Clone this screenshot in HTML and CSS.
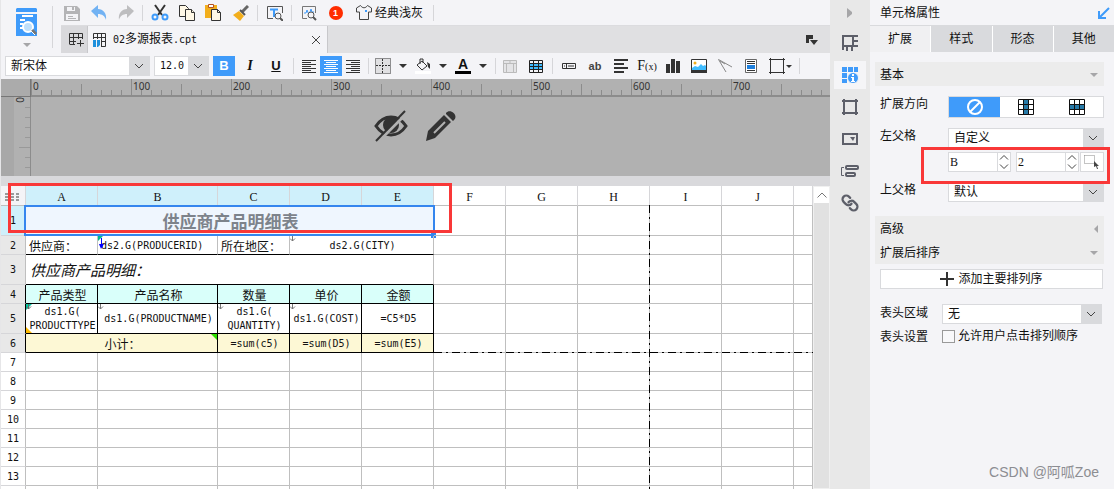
FILE: index.html
```html
<!DOCTYPE html>
<html lang="zh-CN">
<head>
<meta charset="utf-8">
<title>02多源报表.cpt</title>
<link rel="stylesheet" href="styles.css">
</head>
<body>
<div class="app">
  <main class="main">
    <header class="top">
      <button class="logo" aria-label="模板">
        <svg width="22" height="28" viewBox="0 0 22 28"><path fill="#3f9bfa" d="M1 0h19l1 1v3H0V1zM0 6h21v22H0z"/><path stroke="#fff" stroke-width="2" d="M6 8h11M4 12h5M4 16h3M4 20h5" /><circle cx="12" cy="19" r="5" fill="#bfe0fb" stroke="#fff" stroke-width="2"/><path stroke="#777" stroke-width="3" d="M16 22l4 4"/><path stroke="#fff" d="M15 23l4 4"/></svg>
        <span class="caret pale"></span>
      </button>
      <div class="topright">
        <div class="tools">
          <button aria-label="保存"><svg width="16" height="16"><path fill="#b4b4b6" d="M0 1h13l3 3v12H0z"/><path fill="#f4f4f7" d="M3 2h8v4H3zM2 9h12v6H2z"/><path fill="#b4b4b6" d="M8 2h2v3H8zM4 11h5v1H4zM4 13h8v1H4z"/></svg></button>
          <button aria-label="撤销"><svg width="16" height="16"><path fill="#72b2f3" d="M0 6l7-6v4c5 0 9 4 8 11-1-4-4-6-8-6v4z"/></svg></button>
          <button aria-label="重做"><svg width="16" height="16"><path fill="#bdbdbf" d="M16 6L9 0v4C4 4 0 8 1 15c1-4 4-6 8-6v4z"/></svg></button>
          <i class="sep"></i>
          <button aria-label="剪切"><svg width="18" height="17" fill="none"><path stroke="#333" stroke-width="2" d="M4 1l7 10M14 1L7 11"/><circle cx="4" cy="13" r="2.5" stroke="#3f9bfa" stroke-width="2"/><circle cx="14" cy="13" r="2.5" stroke="#3f9bfa" stroke-width="2"/></svg></button>
          <button aria-label="复制"><svg width="16" height="16" fill="#fff8e6" stroke="#333"><path d="M.5.5h6l3 3v8h-9z"/><path d="M6.500 4.500h6l3 3v8h-9z"/><path d="M12.500 4.500v3h3"/></svg></button>
          <button aria-label="粘贴"><svg width="17" height="17"><path fill="#f2ae1c" d="M0 1h12v13H0z"/><path fill="#fff" stroke="#b5521f" d="M3.500.5h5v3h-5z"/><path fill="#fff8e6" stroke="#333" d="M6.500 5.500h6l3 3v8h-9z"/><path stroke="#333" fill="none" d="M12.500 5.500v3h3"/></svg></button>
          <button aria-label="格式刷"><svg width="16" height="16"><path stroke="#666" stroke-width="3" d="M15 1l-6 6"/><path stroke="#555" stroke-width="2" d="M7 5l5 5"/><path fill="#f2ae1c" d="M6 6l5 5-4 5-7-6z"/></svg></button>
          <i class="sep"></i>
          <button aria-label="预览"><svg width="16" height="16" fill="none"><path stroke="#555" d="M15.500 8V1.500h-15v12H6"/><path stroke="#3f9bfa" stroke-width="2" d="M3 4.500h8M7 4v8"/><circle cx="11" cy="11" r="3" fill="#f4f4f7" stroke="#555"/><path stroke="#555" stroke-width="2" d="M13 13l3 3"/></svg></button>
          <i class="sep"></i>
          <button aria-label="性能"><svg width="16" height="16" fill="none"><path stroke="#777" d="M14.500 8V1.500h-13v12H6"/><path stroke="#3f9bfa" d="M3 8h2l1-3 2 5 2-6 1 3h2"/><circle cx="10" cy="10" r="3" fill="#f4f4f7" stroke="#555"/><path stroke="#555" stroke-width="2" d="M12 12l3 3"/></svg></button>
          <button aria-label="通知"><span class="badge">1</span></button>
          <button class="theme"><svg width="16" height="15" fill="none"><path stroke="#444" d="M4.500.5L.5 3v4h3v7.500h9V7h3V3l-4-2.500c-2 3-5 3-7 0z"/><path fill="#3f9bfa" d="M9 5h2v2H9z"/></svg>经典浅灰</button>
          <i class="sep"></i>
        </div>
        <div class="tabs">
          <button class="newtab" aria-label="新建"><svg width="15" height="15" fill="none" stroke="#333"><path d="M.5 12V1.500h13V7M.5 5.500h13M.5 9.500H7M4.500 2v10M9.500 2v5M.5 12.500H6M11.500 8v6.500M8 11.500h7"/></svg></button>
          <div class="filetab">
            <svg width="14" height="14" fill="none"><path stroke="#333" d="M.5 6V.5h12v13H8M.5 4.500h12M8 8.500h4.500M4.500 1v5M8.500 1v12"/><path fill="#1e90dc" d="M0 7h3v7H0zM4 7h3v5l-2 2H4z"/></svg>
            <span class="filename"><span class="mono">02</span>多源报表<span class="mono">.cpt</span></span>
            <button class="close" aria-label="关闭"><svg width="8" height="8" stroke="#444"><path d="M0 0l8 8M8 0L0 8"/></svg></button>
          </div>
          <button class="tablist" aria-label="标签列表"><svg width="12" height="10" fill="#333"><path d="M0 0h7v4H3v4H0zM4 5h8l-4 5z"/></svg></button>
        </div>
      </div>
    </header>

    <div class="format">
      <label class="pick fontpick"><select aria-label="字体"><option>新宋体</option></select><svg class="chev" viewBox="0 0 20 18"><path d="M6 7l4 4 4-4"/></svg></label>
      <label class="pick sizepick"><select class="mono" aria-label="字号"><option>12.0</option></select><svg class="chev" viewBox="0 0 20 18"><path d="M6 7l4 4 4-4"/></svg></label>
      <button class="b on"><b>B</b></button>
      <button class="b it">I</button>
      <button class="b un">U</button>
      <i class="sep wide"></i>
      <button class="al" aria-label="左对齐"><svg width="14" height="13" stroke="#333"><path d="M0 .5h14M0 2.500h9M0 4.500h14M0 6.500h9M0 8.500h14M0 10.500h9M0 12.500h14"/></svg></button>
      <button class="al on" aria-label="居中"><svg width="14" height="13" stroke="#fff"><path d="M0 .5h14M2 2.500h10M0 4.500h14M2 6.500h10M0 8.500h14M2 10.500h10M0 12.500h14"/></svg></button>
      <button class="al" aria-label="右对齐"><svg width="14" height="13" stroke="#333"><path d="M0 .5h14M5 2.500h9M0 4.500h14M5 6.500h9M0 8.500h14M5 10.500h9M0 12.500h14"/></svg></button>
      <i class="sep wide"></i>
      <button class="drop" aria-label="边框"><svg width="16" height="16" fill="none" stroke="#333"><path fill="#e0e0e2" stroke-dasharray="1 1" d="M.5.5h15v15H.5z"/><path stroke-dasharray="2 1" d="M7.500 1v14M1 7.500h14"/></svg><span class="caret"></span></button>
      <button class="drop" aria-label="填充"><svg width="16" height="16" fill="none"><path stroke="#333" d="M7 3l5 5-5 4-5-5zM5 6V1h3v4"/><path fill="#333" d="M12 4l3 2v5l-2-2z"/><path fill="#fff" d="M0 13h16v3H0z"/></svg><span class="caret"></span></button>
      <button class="drop" aria-label="文字颜色"><span class="fontcolor">A</span><span class="caret"></span></button>
      <i class="sep slim"></i>
      <button class="b" aria-label="单元格元素"><svg width="14" height="13" fill="none" stroke="#bbb"><path fill="#e4e4e6" d="M.5.5h13v12H.5zM0 3.500h14M3.500 4v8M10.500 4v8M7 0v3"/></svg></button>
      <button class="b" aria-label="表格"><svg width="14" height="13" fill="none" stroke="#222"><path fill="#3fbcff" d="M0 4h14v5H0z" stroke="none"/><path d="M.5.5h13v12H.5zM0 3.500h14M0 6.500h14M0 9.500h14M4.500 0v13M9.500 0v13"/></svg></button>
      <i class="sep"></i>
      <button class="b" aria-label="文本框"><svg width="14" height="6" fill="none" stroke="#333"><path d="M.5.5h13v5H.5zM4.500 0v6M2 3h1M6 3h6"/></svg></button>
      <button class="b ab">ab</button>
      <button class="b" aria-label="富文本"><svg width="14" height="14" stroke="#333" stroke-width="2"><path d="M0 1h14M0 5h10M0 9h14M0 13h10"/></svg></button>
      <button class="b fx">F<small>(x)</small></button>
      <button class="b" aria-label="图表"><svg width="14" height="14" fill="#333"><path d="M0 5h4v9H0zM5 0h4v14H5zM10 2h4v12h-4z"/></svg></button>
      <button class="b" aria-label="图片"><svg width="16" height="14"><path fill="#fff" stroke="#333" d="M.5.5h15v13H.5z"/><path fill="#3fbcff" d="M1 9l3-2 3 1 3-3 2 2 2-1 1 1v4H1z"/><path fill="#333" d="M0 11h16v3H0z"/><circle cx="4" cy="4" r="1.500" fill="#f2ae1c"/></svg></button>
      <button class="b" aria-label="斜线"><svg width="14" height="14" stroke="#888" fill="none"><path d="M8 13L.5.500 14 8M2 2l5 3"/></svg></button>
      <button class="b" aria-label="子报表"><svg width="12" height="14"><path fill="#fff" stroke="#666" d="M.5.5h11v13H.5z"/><path stroke="#333" d="M2 2.500h8M2 4.500h8M2 11.500h8"/><path fill="#1e7fdc" d="M2 6h8v4H2z"/></svg></button>
      <button class="b frame" aria-label="悬浮元素"><svg width="16" height="16" stroke="#333" fill="none"><path d="M1.500 0v16M14.500 0v16M0 1.500h16M0 14.500h16"/></svg><span class="caret tiny"></span></button>
      <i class="sep"></i>
    </div>

    <section class="canvas">
      <div class="corner"></div>
      <svg class="hruler" height="17">
        <defs>
          <pattern id="h" width="100" height="17" patternUnits="userSpaceOnUse"><path stroke="#8c8c8c" d="M.5 0v17M50.500 5v12M10.500 11v6M20.500 11v6M30.500 11v6M40.500 11v6M60.500 11v6M70.500 11v6M80.500 11v6M90.500 11v6"/></pattern>
          <pattern id="v" width="17" height="100" patternUnits="userSpaceOnUse"><path stroke="#999" d="M5 50.500h12M11 10.500h6M11 20.500h6M11 30.500h6M11 40.500h6M11 60.500h6M11 70.500h6M11 80.500h6M11 90.500h6"/></pattern>
        </defs>
        <rect width="100%" height="17" fill="url(#h)"/>
        <g class="rnum"><text x="2" y="11">0</text><text x="102" y="11">100</text><text x="202" y="11">200</text><text x="302" y="11">300</text><text x="402" y="11">400</text><text x="502" y="11">500</text><text x="602" y="11">600</text><text x="702" y="11">700</text></g>
      </svg>
      <div class="vruler"><span class="vnum">0</span><svg width="17" height="100%"><rect width="17" height="100%" fill="url(#v)"/></svg></div>
      <div class="stage">
        <svg width="34" height="32" viewBox="0 0 34 32"><path fill="none" stroke="#333" stroke-width="3" d="M2 16c8-12 22-12 30 0-8 12-22 12-30 0z"/><circle cx="17" cy="15" r="8" fill="#333"/><path stroke="#b1b1b1" stroke-width="3" d="M4 32L33 3"/><path stroke="#333" stroke-width="2" d="M2 31L31 1"/></svg>
        <svg width="32" height="32" viewBox="0 0 32 32"><path fill="#333" d="M1 31l2-10L19 5l7 7-16 16zM21 3c4-5 13 2 8 7l-1 1-7-7z"/><path stroke="#b1b1b1" stroke-width="2" d="M9 23L20 12"/></svg>
      </div>
    </section>
    <div class="splitter"></div>

    <section class="sheet">
      <div class="gridwrap">
        <table class="grid">
          <colgroup><col class="c0"><col class="c"><col class="cw"><col class="c"><col class="c"><col class="c"><col class="c"><col class="c"><col class="c"><col class="c"><col class="c"><col></colgroup>
          <thead><tr><th class="all"><svg width="16" height="9" fill="#999"><path d="M0 0h4v2H0zM6 0h3v2H6zM11 0h3v2h-3zM0 3h4v2H0zM6 3h3v2H6zM11 3h3v2h-3zM0 6h4v2H0zM6 6h3v2H6zM11 6h3v2h-3z"/></svg></th><th class="sel">A</th><th class="sel">B</th><th class="sel">C</th><th class="sel">D</th><th class="sel">E</th><th>F</th><th>G</th><th>H</th><th>I</th><th>J</th><th></th></tr></thead>
          <tbody>
            <tr class="tall"><th class="sel">1</th><td colspan="5" class="title">供应商产品明细表<i class="handle"></i></td><td></td><td></td><td></td><td></td><td></td><td></td></tr>
            <tr class="line"><th class="used">2</th><td class="cn left">供应商：</td><td class="left id"><svg class="mark" width="8" height="14"><path fill="#00b894" d="M0 0h5L0 5z"/><path fill="#00f" d="M3 2h1v6h2l-3 5-2-5h2z"/></svg>ds2.G(PRODUCERID)</td><td class="cn left nob">所在地区：</td><td colspan="2"><svg class="mark" width="6" height="6"><path fill="none" stroke="#777" d="M2.500 0v5M0 2.500l2.500 2.500L5 2.500"/></svg>ds2.G(CITY)</td><td></td><td></td><td></td><td></td><td></td><td></td></tr>
            <tr class="tall line"><th class="used">3</th><td colspan="5" class="sub">供应商产品明细：</td><td></td><td></td><td></td><td></td><td></td><td></td></tr>
            <tr class="box mint"><th class="used">4</th><td class="cn">产品类型</td><td class="cn">产品名称</td><td class="cn">数量</td><td class="cn">单价</td><td class="cn">金额</td><td></td><td></td><td></td><td></td><td></td><td></td></tr>
            <tr class="box tall"><th class="used">5</th><td><svg class="mark" width="6" height="6"><path fill="#00c8a0" d="M0 0h6L0 6z"/><path stroke="#666" fill="none" d="M2.500 0v5M0 2.500l2.500 2.500L5 2.500"/></svg><svg class="mark low" width="6" height="6"><path fill="#fb0" d="M0 0l6 6H0z"/></svg>ds1.G(<br>PRODUCTTYPE</td><td><svg class="mark" width="6" height="6"><path fill="none" stroke="#777" d="M2.500 0v5M0 2.500l2.500 2.500L5 2.500"/></svg>ds1.G(PRODUCTNAME)</td><td><svg class="mark" width="6" height="6"><path fill="none" stroke="#777" d="M2.500 0v5M0 2.500l2.500 2.500L5 2.500"/></svg>ds1.G(<br>QUANTITY)</td><td><svg class="mark" width="6" height="6"><path fill="none" stroke="#777" d="M2.500 0v5M0 2.500l2.500 2.500L5 2.500"/></svg>ds1.G(COST)</td><td>=C5*D5</td><td></td><td></td><td></td><td></td><td></td><td></td></tr>
            <tr class="box cream"><th class="used">6</th><td colspan="2" class="cn"><svg class="mark far" width="6" height="6"><path fill="#2ee000" d="M0 0h6v6z"/></svg>小计：</td><td>=sum(c5)</td><td>=sum(D5)</td><td>=sum(E5)</td><td></td><td></td><td></td><td></td><td></td><td></td></tr>
            <tr><th>7</th><td></td><td></td><td></td><td></td><td></td><td></td><td></td><td></td><td></td><td></td><td></td></tr>
            <tr><th>8</th><td></td><td></td><td></td><td></td><td></td><td></td><td></td><td></td><td></td><td></td><td></td></tr>
            <tr><th>9</th><td></td><td></td><td></td><td></td><td></td><td></td><td></td><td></td><td></td><td></td><td></td></tr>
            <tr><th>10</th><td></td><td></td><td></td><td></td><td></td><td></td><td></td><td></td><td></td><td></td><td></td></tr>
            <tr><th>11</th><td></td><td></td><td></td><td></td><td></td><td></td><td></td><td></td><td></td><td></td><td></td></tr>
            <tr><th>12</th><td></td><td></td><td></td><td></td><td></td><td></td><td></td><td></td><td></td><td></td><td></td></tr>
            <tr><th>13</th><td></td><td></td><td></td><td></td><td></td><td></td><td></td><td></td><td></td><td></td><td></td></tr>
            <tr><th></th><td></td><td></td><td></td><td></td><td></td><td></td><td></td><td></td><td></td><td></td><td></td></tr>
          </tbody>
        </table>
        <div class="pagev"></div>
        <div class="pageh"></div>
      </div>
      <div class="scroll"><button aria-label="向上滚动"><svg width="10" height="6" fill="none" stroke="#777"><path d="M.5 5.500L5 1l4.500 4.500"/></svg></button></div>
      <div class="note note-title"></div>
    </section>
  </main>

  <nav class="rail">
    <button class="fold" aria-label="收起"><svg width="6" height="10" fill="#a6a6a8"><path d="M0 0l5 4v2l-5 4z"/></svg></button>
    <button aria-label="单元格元素"><svg width="16" height="16" fill="none" stroke="#5d5f69" stroke-width="2"><path d="M16 1H1v14M1 11h10V1M12 6h4M12 11h4M5 12v4M10 12v4"/></svg></button>
    <button class="on" aria-label="单元格属性"><svg width="17" height="16" fill="#3f9bfa"><path d="M0 0h5v5H0zM6 0h5v5H6zM12 0h4v5h-4zM0 6h5v5H0zM0 12h5v4H0z"/><circle cx="11" cy="11" r="5.500" stroke="#f5f5f7"/><path fill="#fff" d="M10 7h2v2h-2zM9 10h3v4h1v1H9v-1h1v-3H9z"/></svg></button>
    <button aria-label="悬浮元素"><svg width="16" height="16" fill="none" stroke="#5d5f69" stroke-width="2"><path d="M2 2h12v12H2zM0 2h2V0M14 0v2h2M0 14h2v2M14 16v-2h2"/></svg></button>
    <button aria-label="控件设置"><svg width="16" height="12" fill="none" stroke="#5d5f69" stroke-width="2"><path d="M1 1h14v10H1z"/><path stroke="none" fill="#5d5f69" d="M8 4h5l-2 4z"/></svg></button>
    <button aria-label="条件属性"><svg width="18" height="12" fill="none" stroke="#5d5f69" stroke-width="2"><rect x="5" y="1" width="12" height="3" rx="1"/><rect x="5" y="8" width="9" height="3" rx="1"/><path stroke-width="1" d="M3 2.500H.5v8H3"/></svg></button>
    <button aria-label="超级链接"><svg width="18" height="18" viewBox="0 0 24 24" fill="none" stroke="#5d5f69" stroke-width="3" stroke-linecap="round"><path d="M14 13a5 5 0 0 1-7.540.540l-3-3a5 5 0 0 1 7.070-7.070l1.720 1.710M10 11a5 5 0 0 1 7.540-.540l3 3a5 5 0 0 1-7.070 7.070l-1.710-1.710"/></svg></button>
  </nav>

  <aside class="panel">
    <div class="ptitle"><span>单元格属性</span><svg width="12" height="12" fill="none" stroke="#3f9bfa" stroke-width="2"><path d="M11 1L2 10M1 4v7h7"/></svg></div>
    <div class="ptabs"><button class="on">扩展</button><button>样式</button><button>形态</button><button>其他</button></div>
    <div class="pbody">
      <h2>基本<span class="caret pale"></span></h2>
      <div class="row first"><span class="lbl">扩展方向</span>
        <div class="seg"><button class="on" aria-label="不扩展"><svg width="16" height="16" fill="none" stroke="#fff" stroke-width="2"><circle cx="8" cy="8" r="7"/><path d="M3 13L13 3"/></svg></button><button aria-label="纵向"><svg width="16" height="16" fill="none" stroke="#111"><path fill="#277aa8" stroke="none" d="M5 0h6v16H5z"/><path d="M.5.5h15v15H.5zM0 5.500h16M0 10.500h16M5.500 0v16M10.500 0v16"/></svg></button><button aria-label="横向"><svg width="16" height="16" fill="none" stroke="#111"><path fill="#277aa8" stroke="none" d="M0 5h16v6H0z"/><path d="M.5.5h15v15H.5zM0 5.500h16M0 10.500h16M5.500 0v16M10.500 0v16"/></svg></button></div>
      </div>
      <div class="row"><label class="lbl" for="lp">左父格</label><div class="pick"><select id="lp"><option>自定义</option></select><svg class="chev" viewBox="0 0 20 18"><path d="M6 7l4 4 4-4"/></svg></div></div>
      <div class="row near"><span class="lbl"></span>
        <div class="cellref">
          <input class="serif" type="text" value="B" aria-label="列"><span class="spin"><button aria-label="列增"><svg width="10" height="5"><path d="M1 4.500L5 .5l4 4"/></svg></button><button aria-label="列减"><svg width="10" height="5"><path d="M1 .5l4 4 4-4"/></svg></button></span>
          <input class="serif second" type="text" value="2" aria-label="行"><span class="spin"><button aria-label="行增"><svg width="10" height="5"><path d="M1 4.500L5 .5l4 4"/></svg></button><button aria-label="行减"><svg width="10" height="5"><path d="M1 .5l4 4 4-4"/></svg></button></span>
          <button class="pickcell" aria-label="选择单元格"><svg width="16" height="14"><path fill="none" stroke="#888" stroke-dasharray="1 1" d="M.5.5h10M.5 8.500h10M.5.5v8M10.500.5v8"/><path fill="#444" d="M10 6l5 5h-2l1 3h-1l-1-3-2 1z"/></svg></button>
        </div>
        <div class="note note-ref"></div>
      </div>
      <div class="row"><label class="lbl" for="up">上父格</label><div class="pick"><select id="up"><option>默认</option></select><svg class="chev" viewBox="0 0 20 18"><path d="M6 7l4 4 4-4"/></svg></div></div>
      <h2 class="gap">高级<span class="caret pale side"></span></h2>
      <h2>扩展后排序<span class="caret pale"></span></h2>
      <button class="add"><svg width="14" height="14" stroke="#333" stroke-width="2"><path d="M0 7h14M7 0v14"/></svg>添加主要排列序</button>
      <div class="row head"><label class="lbl" for="ha">表头区域</label><div class="pick"><select id="ha"><option>无</option></select><svg class="chev" viewBox="0 0 20 18"><path d="M6 7l4 4 4-4"/></svg></div></div>
      <div class="row set"><span class="lbl">表头设置</span><label class="chk"><input type="checkbox">允许用户点击排列顺序</label></div>
    </div>
    <div class="credit">CSDN @阿呱Zoe</div>
  </aside>
</div>
</body>
</html>
```
FILE: styles.css
```css
* { box-sizing: border-box; }
body { margin: 0; font: 12px/16px "Liberation Sans", "Noto Sans CJK SC", sans-serif; color: #111; background: #f4f4f7; }
button, select, input { font: inherit; color: inherit; margin: 0; padding: 0; border: 0; background: none; border-radius: 0; }
button { display: flex; align-items: center; justify-content: center; flex: none; }
svg { flex: none; display: block; }
.mono { font-family: "DejaVu Sans Mono", monospace; font-size: 10px; }
.serif { font-family: "Liberation Serif", serif; font-size: 12px; }

.app { display: flex; height: 100vh; overflow: hidden; }
.main { flex: 1; min-width: 0; display: flex; flex-direction: column; border-left: 1px solid #e6e6e8; }
.caret { border: 4px solid transparent; border-top-color: #333; border-bottom: 0; }
.caret.pale { border-top-color: #a6a6a8; }
.caret.tiny { border-width: 3px; border-bottom: 0; }
.caret.side { border: 4px solid transparent; border-right-color: #a6a6a8; border-left: 0; }
.sep { flex: none; width: 7px; height: 16px; background: linear-gradient(#d6d6d9, #d6d6d9) center / 1px 100% no-repeat; }
.sep.wide { width: 9px; }
.sep.slim { width: 4px; }

.top { display: flex; }
.logo { width: 52px; height: 42px; margin-top: 6px; flex-direction: column; gap: 7px; border-right: 1px solid #d6d6d9; }
.topright { flex: 1; min-width: 0; padding-left: 5px; }
.tools { display: flex; align-items: center; height: 25px; }
.tools button { width: 27px; }
.tools .theme { width: auto; gap: 3px; padding: 0 7px; }
.badge { width: 14px; height: 14px; border-radius: 50%; background: #ff2d00; color: #fff; font-size: 9px; line-height: 14px; font-weight: bold; }
.tabs { display: flex; height: 28px; margin-left: 3px; background: #e0e0e2; border-top: 1px solid #dcdcdf; }
.newtab { width: 27px; background: #d9d9dc; border-right: 1px solid #c8c8cb; padding-left: 4px; }
.filetab { display: flex; align-items: center; gap: 6px; width: 240px; padding: 0 7px 0 5px; background: #f4f4f7; border-right: 1px solid #c8c8cb; }
.filename { flex: 1; }
.tablist { margin-left: auto; width: 36px; }

.format { display: flex; align-items: center; height: 26px; padding-left: 4px; }
.pick { display: grid; grid-template: 18px / minmax(0, 1fr); background: #fff; border: 1px solid #d9dadd; height: 20px; }
.pick select { grid-area: 1 / 1; appearance: none; padding-left: 5px; line-height: 18px; }
.chev { grid-area: 1 / 1; justify-self: end; width: 20px; height: 18px; background: #d9dadd; fill: none; stroke: #444; pointer-events: none; }
.fontpick { width: 145px; margin-right: 4px; }
.sizepick { width: 55px; margin-right: 2px; }
.b { width: 22px; height: 20px; margin: 0 2px; font-size: 13px; }
.b.on, .al.on { background: #3f9bfa; color: #fff; }
.it { font: italic bold 14px "Liberation Serif", serif; }
.un { font-weight: bold; text-decoration: underline; }
.al { width: 22px; height: 20px; }
.drop { width: 40px; height: 20px; gap: 8px; padding: 0 4px 0 0; }
.fontcolor { font-weight: bold; font-size: 14px; line-height: 13px; width: 16px; border-bottom: 3px solid #000; }
.ab { font-size: 11px; font-weight: bold; color: #444; }
.fx { font: 14px "Liberation Serif", serif; }
.fx small { font-size: 10px; }
.frame { gap: 1px; width: 28px; }

.canvas { display: grid; grid-template: 18px 79px / 13px 17px minmax(0, 1fr); background: #b1b1b1; }
.corner { grid-column: 1 / 3; background: #ababab; border-right: 1px solid #777; border-bottom: 1px solid #777; }
.hruler { width: 100%; height: 18px; border-bottom: 2px solid #8c8c8c; }
.vruler { grid-column: 2; position: relative; height: 100%; overflow: hidden; border-right: 1px solid #8c8c8c; }
.rnum, .vnum { font: 10px/10px "Noto Sans", sans-serif; fill: #333; color: #333; }
.vnum { position: absolute; left: 1px; top: 0; writing-mode: sideways-lr; }
.canvas::before { content: ""; grid-area: 2 / 1; background: #a8a8a8; }
.stage { display: flex; gap: 17px; padding: 13px 0 0 343px; }
.splitter { height: 10px; background: #d9d9dc; flex: none; }

.sheet { position: relative; flex: 1; min-height: 0; display: flex; background: #fff; }
.gridwrap { position: relative; flex: 1; min-width: 0; overflow: hidden; }
.grid { width: 100%; table-layout: fixed; border-collapse: separate; border-spacing: 0; }
.c0 { width: 25px; }
.c { width: 72px; }
.cw { width: 120px; }
.grid th, .grid td { position: relative; height: 19px; padding: 1px 0 0; border: 0 solid #bfbfbf; border-width: 0 1px 1px 0; font: 10px/14px "DejaVu Sans Mono", monospace; text-align: center; white-space: nowrap; }
.grid td { padding-left: 2px; }
.grid th { border-color: #d6d6d9 #bfbfbf; }
.grid thead th { height: 20px; border-color: #d6d6d9; border-bottom-color: #bfbfbf; padding-top: 3px; font-family: "Liberation Serif", serif; font-size: 12px; }
.grid .tall th, .grid .tall td { height: 30px; }
.grid th.all { background: #f4f4f7; }
.all svg { margin: 0 auto; }
.grid th.sel { background: #cff0fb; }
.grid th.used { background: #e8e8e8; }
.grid td.cn { font: 12px/16px "Noto Sans CJK SC", sans-serif; }
.grid td.left { text-align: left; padding-left: 3px; }
.grid td.title { font: bold 17px/20px "Noto Sans CJK SC", sans-serif; color: #7d838b; background: #eff6fe; }
.title::before { content: ""; position: absolute; inset: -1px -2px; border: 2px solid #3586ee; }
.handle { position: absolute; right: -3px; bottom: -3px; width: 5px; height: 5px; background: #3586ee; }
.grid td.sub { font: italic 15px/20px "Noto Sans CJK SC", sans-serif; text-align: left; padding-left: 4px; }
.line td:nth-child(-n+5):not(:empty) { border-bottom-color: #000; }
.grid .nob { border-right-color: #bfbfbf; }
.box th, .box td:not(:empty) { border-right-color: #000; }
.box td:not(:empty) { border-bottom-color: #000; }
.mint td:not(:empty) { background: #d9fffa; }
.cream td:not(:empty) { background: #fdf8d5; }
.mark { position: absolute; left: 0; top: 0; }
.mark.low { top: auto; bottom: 0; }
.mark.far { left: auto; right: 0; }
.pagev, .pageh { position: absolute; --dash: #000 0 8px, transparent 8px 12px, #000 12px 14px, transparent 14px 18px; }
.pagev { left: 648px; top: 19px; bottom: 0; width: 1px; background: repeating-linear-gradient(to bottom, var(--dash)); }
.pageh { left: 433px; right: 0; top: 166px; height: 1px; background: repeating-linear-gradient(to right, var(--dash)); }
.scroll { width: 17px; background: #e1e1e1; border: 1px solid #f0f0f0; }
.scroll button { width: 15px; height: 16px; background: #fff; }
.note { position: absolute; border: 3px solid #f93838; pointer-events: none; }
.note-title { left: 7px; top: -3px; width: 444px; height: 50px; }

.rail { flex: none; width: 40px; background: #e8e8e8; display: flex; flex-direction: column; align-items: center; gap: 4px; }
.rail button { width: 32px; height: 28px; }
.rail .fold { height: 25px; }
.rail .on { background: #f5f5f7; }

.panel { position: relative; flex: none; width: 244px; }
.ptitle { display: flex; justify-content: space-between; align-items: center; height: 26px; padding: 0 4px 0 10px; border-bottom: 1px solid #d9dadd; }
.ptabs { display: flex; gap: 1px; height: 26px; background: #fff; }
.ptabs button { flex: 1; background: #d9dadd; }
.ptabs .on { background: #f0f0f2; }
.pbody { padding: 10px 10px 0 5px; }
h2 { display: flex; align-items: center; justify-content: space-between; height: 24px; margin: 0; padding: 2px 6px 0 5px; font: inherit; background: #ececec; }
h2.gap { margin-top: 14px; }
.row { position: relative; display: flex; margin-top: 10px; padding-left: 5px; }
.row.near { margin-top: 4px; }
.lbl { flex: none; width: 68px; height: 16px; }
.row > :nth-child(2) { flex: 1; min-width: 0; }
.seg { display: flex; height: 22px; background: #fff; border: 1px solid #d9dadd; }
.seg button { flex: 1; }
.seg .on { background: #3f9bfa; }
.cellref { display: flex; height: 20px; }
.cellref input { flex: 1; width: 0; background: #fff; border: 1px solid #d9dadd; padding-left: 1px; }
.cellref .second { margin-left: 5px; }
.spin { width: 13px; background: #fff; border: 1px solid #d9dadd; border-left: 0; }
.spin button { width: 100%; height: 9px; }
.spin svg { fill: none; stroke: #444; }
.pickcell { width: 24px; margin-left: 1px; background: #fff; border: 1px solid #d9dadd; }
.note-ref { left: 46px; right: -6px; top: -5px; height: 37px; z-index: 1; }
.add { width: 223px; max-width: 100%; height: 20px; margin: 5px 0 0 5px; gap: 4px; background: #fff; border: 1px solid #d9dadd; }
.row.head { margin-top: 15px; padding-right: 2px; }
.head .lbl, .set .lbl { width: 62px; padding-top: 1px; }
.row.set { margin-top: 4px; }
.chk { display: flex; align-items: center; gap: 3px; white-space: nowrap; }
.chk input { appearance: none; flex: none; width: 13px; height: 13px; border: 1px solid #999; background: #f8f8fa; }
.credit { position: absolute; right: 15px; bottom: 7px; font-size: 14px; line-height: 20px; color: #8c8d92; white-space: nowrap; }
```
